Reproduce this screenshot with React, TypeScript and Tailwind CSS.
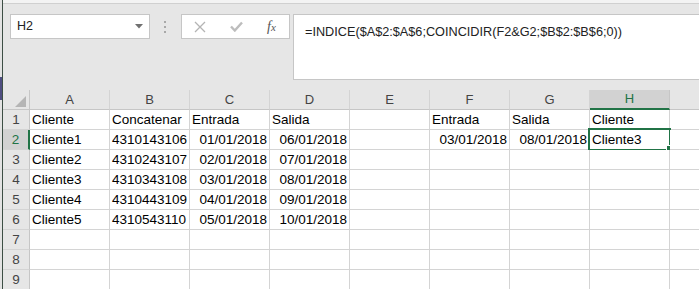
import React from "react";

const COLS = ["A", "B", "C", "D", "E", "F", "G", "H", "I"];

type Cell = { v: string; right?: boolean };

const ROWS: Cell[][] = [
  [{ v: "Cliente" }, { v: "Concatenar" }, { v: "Entrada" }, { v: "Salida" }, { v: "" }, { v: "Entrada" }, { v: "Salida" }, { v: "Cliente" }, { v: "" }],
  [{ v: "Cliente1" }, { v: "4310143106" }, { v: "01/01/2018", right: true }, { v: "06/01/2018", right: true }, { v: "" }, { v: "03/01/2018", right: true }, { v: "08/01/2018", right: true }, { v: "Cliente3" }, { v: "" }],
  [{ v: "Cliente2" }, { v: "4310243107" }, { v: "02/01/2018", right: true }, { v: "07/01/2018", right: true }],
  [{ v: "Cliente3" }, { v: "4310343108" }, { v: "03/01/2018", right: true }, { v: "08/01/2018", right: true }],
  [{ v: "Cliente4" }, { v: "4310443109" }, { v: "04/01/2018", right: true }, { v: "09/01/2018", right: true }],
  [{ v: "Cliente5" }, { v: "4310543110" }, { v: "05/01/2018", right: true }, { v: "10/01/2018", right: true }],
  [],
  [],
  [],
];

function Toolbar() {
  return (
    <div className="flex items-start pt-[10px] h-[86px] shrink-0">
      {/* name box */}
      <div className="ml-[7px] w-[140px] h-[25px] bg-white border border-[#c6c6c6] flex items-center pl-[6px] pr-[6px] justify-between">
        <span className="text-[12.5px] text-[#222]">H2</span>
        <svg width="8" height="5" viewBox="0 0 8 5">
          <path d="M0 0 L8 0 L4 4.5 Z" fill="#707070" />
        </svg>
      </div>
      {/* grip dots */}
      <div className="ml-[14px] h-[25px] flex flex-col justify-center gap-[3px]">
        <div className="w-[2px] h-[2px] bg-[#a8a8a8]" />
        <div className="w-[2px] h-[2px] bg-[#a8a8a8]" />
        <div className="w-[2px] h-[2px] bg-[#a8a8a8]" />
      </div>
      {/* cancel / enter / fx */}
      <div className="ml-[15px] w-[109px] h-[25px] bg-white border border-[#c6c6c6] flex items-center">
        <svg className="ml-[12px]" width="12" height="12" viewBox="0 0 12 12">
          <path d="M1 1 L11 11 M11 1 L1 11" stroke="#b4b4b4" strokeWidth="1.3" fill="none" />
        </svg>
        <svg className="ml-[24px]" width="13" height="11" viewBox="0 0 13 11">
          <path d="M1 5.5 L4.8 9.5 L12 1.5" stroke="#bdbdbd" strokeWidth="2.4" fill="none" />
        </svg>
        <span className="ml-[24px] italic text-[#555] text-[14px] leading-none" style={{ fontFamily: '"Liberation Serif", serif' }}>
          f<span className="text-[11px] italic">x</span>
        </span>
      </div>
      {/* formula */}
      <div className="ml-[3px] flex-1 h-[66px] bg-white border border-r-0 border-[#c6c6c6] pl-[11px] pt-[4px]">
        <span className="text-[12.7px] text-[#222] leading-[16px]">=INDICE($A$2:$A$6;COINCIDIR(F2&amp;G2;$B$2:$B$6;0))</span>
      </div>
    </div>
  );
}

function HeaderRow() {
  return (
    <div className="flex h-[20px] shrink-0">
      <div className="w-[27px] shrink-0 border-r border-b border-[#c6c6c6] bg-[#e6e6e6] relative">
        <svg className="absolute right-[3px] bottom-[2px]" width="11" height="11" viewBox="0 0 11 11">
          <path d="M11 0 L11 11 L0 11 Z" fill="#b5b5b5" />
        </svg>
      </div>
      {COLS.map((c) => {
        const sel = c === "H";
        // column I's letter sits past the window's right edge
        const label = c === "I" ? "" : c;
        return (
          <div
            key={c}
            className={
              sel
                ? "w-[80px] shrink-0 border-r border-[#c6c6c6] border-b-2 border-b-[#217346] bg-[#d2d2d2] text-[#217346] flex items-center justify-center text-[13px]"
                : "w-[80px] shrink-0 border-r border-b border-[#c6c6c6] border-r-[#d4d4d4] bg-[#e6e6e6] text-[#444] flex items-center justify-center text-[13px]"
            }
          >
            {label}
          </div>
        );
      })}
    </div>
  );
}

function DataRow({ n, cells }: { n: number; cells: Cell[] }) {
  const selRow = n === 2;
  return (
    <div className="flex h-[20px] shrink-0">
      <div
        className={
          selRow
            ? "w-[27px] shrink-0 border-b border-[#d4d4d4] border-r-2 border-r-[#217346] bg-[#d2d2d2] text-[#217346] flex items-end justify-center pb-[1px] text-[13.5px] leading-[16px]"
            : "w-[27px] shrink-0 border-b border-r border-[#d4d4d4] border-r-[#c6c6c6] bg-[#e6e6e6] text-[#444] flex items-end justify-center pb-[1px] text-[13.5px] leading-[16px]"
        }
      >
        {n}
      </div>
      {COLS.map((c, i) => {
        const cell = cells[i];
        const sel = selRow && c === "H";
        return (
          <div
            key={c}
            className={
              "w-[80px] shrink-0 border-r border-b border-[#d4d4d4] bg-white relative flex items-end pb-[1px] text-[13.5px] leading-[16px] text-black whitespace-nowrap " +
              (cell && cell.right ? "justify-end pr-[2px]" : "justify-start pl-[2px]")
            }
          >
            {cell ? cell.v : ""}
            {sel && (
              <div className="absolute -left-[2px] -top-[2px] w-[83px] h-[23px] border-2 border-[#217346]">
                <div className="absolute left-[76px] top-[15px] w-[6px] h-[6px] bg-[#217346] border border-white" />
              </div>
            )}
          </div>
        );
      })}
    </div>
  );
}

export default function App() {
  return (
    <div
      className="w-[699px] h-[289px] overflow-hidden flex bg-[#e6e6e6]"
      style={{ fontFamily: '"Liberation Sans", Arial, sans-serif' }}
    >
      {/* edge of the window behind */}
      <div className="w-[3px] shrink-0 flex flex-col border-r border-[#3d4f45] bg-[#e3e3e3]">
        <div className="h-[77px]" />
        <div className="h-[23px] bg-[#4e4d80]" />
      </div>
      <div className="flex-1 flex flex-col min-w-0 overflow-hidden">
        <div className="h-[4px] shrink-0 bg-[#f3f3f3] border-b border-[#d0d0d0]" />
        <Toolbar />
        <HeaderRow />
        {ROWS.map((r, i) => (
          <DataRow key={i} n={i + 1} cells={r} />
        ))}
      </div>
    </div>
  );
}
